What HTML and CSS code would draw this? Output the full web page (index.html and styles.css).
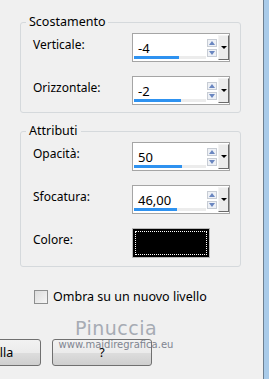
FILE: index.html
```html
<!DOCTYPE html>
<html lang="it">
  <head>
    <meta charset="UTF-8" />
    <title>Ombra</title>
    <link rel="stylesheet" href="styles.css">
  </head>
  <body>
    <div class="dialog">
      <fieldset class="group">
        <legend>Scostamento</legend>
        <div class="row">
          <label>Verticale:</label>
          <div class="spin">
            <div class="spin-value">
              <span>-4</span>
              <div class="track"><div class="fill" style="width: 63%"></div></div>
            </div>
            <div class="arrows"><span class="up"></span><span class="down"></span></div>
            <span class="drop"></span>
          </div>
        </div>
        <div class="row">
          <label>Orizzontale:</label>
          <div class="spin">
            <div class="spin-value">
              <span>-2</span>
              <div class="track"><div class="fill" style="width: 65%"></div></div>
            </div>
            <div class="arrows"><span class="up"></span><span class="down"></span></div>
            <span class="drop"></span>
          </div>
        </div>
      </fieldset>

      <fieldset class="group second">
        <legend>Attributi</legend>
        <div class="row">
          <label>Opacità:</label>
          <div class="spin">
            <div class="spin-value">
              <span>50</span>
              <div class="track"><div class="fill" style="width: 66%"></div></div>
            </div>
            <div class="arrows"><span class="up"></span><span class="down"></span></div>
            <span class="drop"></span>
          </div>
        </div>
        <div class="row">
          <label>Sfocatura:</label>
          <div class="spin">
            <div class="spin-value">
              <span>46,00</span>
              <div class="track"><div class="fill" style="width: 60%"></div></div>
            </div>
            <div class="arrows"><span class="up"></span><span class="down"></span></div>
            <span class="drop"></span>
          </div>
        </div>
        <div class="row">
          <label>Colore:</label>
          <div class="swatch"><span></span></div>
        </div>
      </fieldset>

      <div class="check">
        <span class="box"></span>
        <span>Ombra su un nuovo livello</span>
      </div>

      <div class="buttons">
        <button class="cancel">Annulla</button>
        <button>?</button>
      </div>

      <div class="mark">
        <span class="mark-name">Pinuccia</span>
        <span class="mark-site">www.maidiregrafica.eu</span>
      </div>
    </div>
    <div class="frame"></div>
  </body>
</html>
```

FILE: styles.css
```css
* {
  box-sizing: border-box;
}
body {
  margin: 0;
  height: 379px;
  overflow: hidden;
  display: flex;
  background-color: #f0f0f0;
  font-family: "Noto Sans", "Open Sans", sans-serif;
  font-size: 12px;
  color: #000;
}
.dialog {
  position: relative;
  flex: 1;
  padding-top: 14px;
  overflow: hidden;
}
.frame {
  width: 6px;
  border-left: 1px solid #6d7f90;
  background-color: #a9cbe9;
}
.group {
  margin: 0 0 0 20px;
  width: 221px;
  padding: 3px 0 7px 12px;
  border: 1px solid #d5d9dc;
  border-radius: 3px;
  display: flex;
  flex-direction: column;
  gap: 14px;
}
.group.second {
  margin-top: 10px;
  padding-bottom: 8px;
}
.group legend {
  margin-left: -7px;
  padding: 0 3px;
  line-height: 16px;
  font-size: 12.5px;
}
.row {
  display: flex;
  align-items: flex-start;
}
.row label {
  width: 99px;
  padding-top: 4px;
  line-height: 16px;
}
.spin {
  width: 98px;
  height: 29px;
  border: 1px solid #a5a5a5;
  background-color: #fff;
  display: flex;
  align-items: center;
}
.spin-value {
  width: 73px;
  padding: 6px 0 0 1px;
  align-self: stretch;
  display: flex;
  flex-direction: column;
}
.spin-value span {
  padding-left: 4px;
  font-size: 13px;
  line-height: 16px;
  flex: 1;
}
.track {
  height: 3px;
  margin-bottom: 2px;
  background-color: #ececec;
}
.fill {
  height: 100%;
  background-color: #2e92f0;
}
.arrows {
  width: 10px;
  margin-left: 1px;
  display: flex;
  flex-direction: column;
  gap: 2px;
}
.arrows span {
  height: 8px;
  border: 1px solid #c7ccd4;
  background-color: #eef1f6;
  position: relative;
}
.arrows span::after {
  content: "";
  position: absolute;
  left: 1px;
  border-left: 3px solid transparent;
  border-right: 3px solid transparent;
}
.arrows .up::after {
  top: 1px;
  border-bottom: 4px solid #6a86c0;
}
.arrows .down::after {
  top: 1px;
  border-top: 4px solid #6a86c0;
}
.drop {
  width: 11px;
  height: 25px;
  margin-left: 1px;
  border: 1px solid;
  border-color: #f4f4f4 #6b6b6b #6b6b6b #f4f4f4;
  background-color: #ececec;
  display: flex;
  align-items: center;
  justify-content: center;
}
.drop::after {
  content: "";
  border-left: 3px solid transparent;
  border-right: 3px solid transparent;
  border-top: 3px solid #000;
}
.swatch {
  width: 78px;
  height: 30px;
  border: 1px solid #b8b8b8;
  background-color: #000;
  padding: 2px;
}
.swatch span {
  display: block;
  height: 100%;
  border: 1px dotted #fff;
}
.check {
  margin: 21px 0 0 34px;
  display: flex;
  align-items: center;
  gap: 5px;
  font-size: 12.5px;
}
.check .box {
  width: 14px;
  height: 14px;
  border: 1px solid #8e8f8f;
  background: linear-gradient(135deg, #dcdcdc, #f6f6f6);
}
.buttons {
  margin-top: 34px;
  display: flex;
  gap: 11px;
}
.buttons button {
  width: 100px;
  height: 27px;
  border: 1px solid #707070;
  border-radius: 3px;
  background: linear-gradient(#f2f2f2 0%, #ebebeb 50%, #dddddd 51%, #cfcfcf 100%);
  font-family: "Noto Sans", "Open Sans", sans-serif;
  font-size: 12.5px;
  color: #000;
  padding: 0;
}
.buttons .cancel {
  margin-left: -59px;
  padding-left: 0;
}
.mark {
  position: absolute;
  left: 55px;
  top: 317px;
  width: 122px;
  display: flex;
  flex-direction: column;
  align-items: center;
  color: #9aa0aa;
}
.mark-name {
  font-family: "DejaVu Sans", sans-serif;
  font-size: 19px;
  line-height: 22px;
  letter-spacing: 0.5px;
  opacity: 0.85;
}
.mark-site {
  font-family: "DejaVu Sans", sans-serif;
  font-size: 10px;
  line-height: 12px;
  color: #7f8590;
}
```
